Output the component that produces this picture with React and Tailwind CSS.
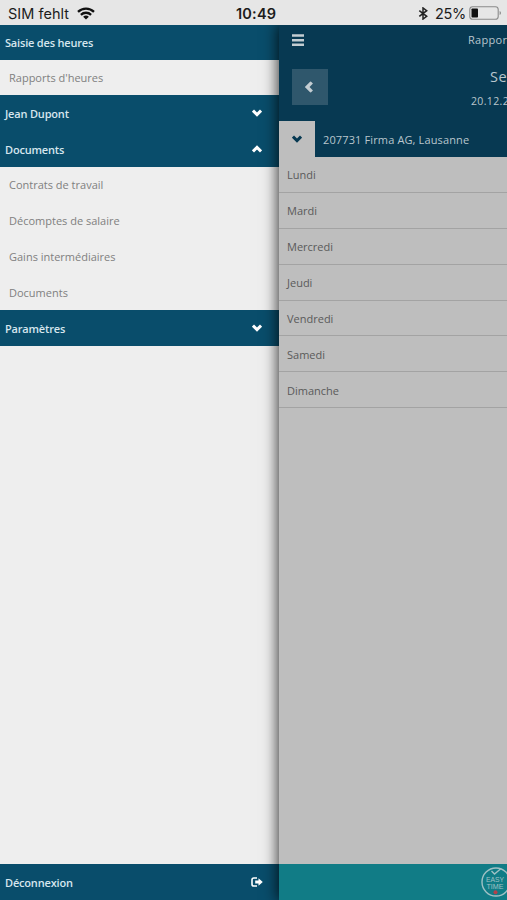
import clsx from "clsx";

const documents = ["Contrats de travail", "Décomptes de salaire", "Gains intermédiaires", "Documents"];

const days = ["Lundi", "Mardi", "Mercredi", "Jeudi", "Vendredi", "Samedi", "Dimanche"];

function Chevron({ className }) {
  return (
    <svg viewBox="0 0 10 8" className={clsx("h-2 w-2.5", className)} fill="none" stroke="currentColor" strokeWidth="2.9">
      <path d="M1 1.6 5 5.6 9 1.6" />
    </svg>
  );
}

function StatusBar() {
  return (
    <header className="flex h-[25px] shrink-0 items-center bg-[#e6e6e6] pt-[3px] pl-2 font-[Inter,sans-serif] text-[14.5px] leading-none text-[#1c1c1c]">
      <span className="w-[69px] whitespace-nowrap tracking-[0.02px]">SIM fehlt</span>
      <svg viewBox="0 0 18 13" className="h-[13px] w-[18px] -translate-y-px" fill="none" stroke="#111" strokeWidth="2.3">
        <path d="M1 4.8a11.5 11.5 0 0 1 16 0" />
        <path d="M3.9 7.8a7.4 7.4 0 0 1 10.2 0" />
        <path d="M6.1 9.8a4.2 4.2 0 0 1 5.8 0L9 12.6Z" fill="#111" stroke="none" />
      </svg>
      <span className="ml-[141px] w-[42px] whitespace-nowrap font-semibold tracking-[0.2px]">10:49</span>
      <svg viewBox="0 0 10 14" className="ml-[140px] h-[13px] w-[10px] -translate-y-px" fill="none" stroke="#222" strokeWidth="1.6">
        <path d="M1 4 9 10 5 13V1L9 4 1 10" />
      </svg>
      <span className="ml-[7px] w-[31px] whitespace-nowrap tracking-[-0.3px]">25%</span>
      <svg viewBox="0 0 33 14" className="ml-[3px] h-[14px] w-[33px] -translate-y-px">
        <rect x="0.8" y="0.8" width="28.4" height="12.4" rx="2.8" fill="none" stroke="#8b8b8b" strokeWidth="1.1" />
        <rect x="2.5" y="2.5" width="6.5" height="9" rx="0.8" fill="#111" />
        <path d="M30.6 5v4q1.4-.6 1.4-2t-1.4-2" fill="#8b8b8b" />
      </svg>
    </header>
  );
}

function MenuHeading({ label, className, children }) {
  return (
    <div className={clsx("flex shrink-0 items-center justify-between bg-[#094d6b] pr-[17px] pl-[5px] font-semibold tracking-[-0.18px] text-[#d6e6ee]", className)}>
      <span className="-translate-y-[0.5px]">{label}</span>
      {children}
    </div>
  );
}

function MenuItem({ label }) {
  return <div className="flex h-[35.8px] items-center pl-[9px] text-[#808080]">{label}</div>;
}

function Drawer() {
  return (
    <nav className="flex w-[279px] shrink-0 flex-col bg-[#eeeeee]">
      <MenuHeading label="Saisie des heures" className="h-[34.5px]" />
      <MenuItem label="Rapports d'heures" />
      <MenuHeading label="Jean Dupont" className="h-[35.8px]">
        <Chevron className="text-white" />
      </MenuHeading>
      <MenuHeading label="Documents" className="h-[35.9px]">
        <Chevron className="rotate-180 text-white" />
      </MenuHeading>
      {documents.map((item) => (
        <MenuItem key={item} label={item} />
      ))}
      <MenuHeading label="Paramètres" className="h-[36px]">
        <Chevron className="text-white" />
      </MenuHeading>
      <MenuHeading label="Déconnexion" className="mt-auto h-9">
        <svg viewBox="0 0 12 10" className="h-2.5 w-3 translate-x-px">
          <path d="M6 1H2.8Q1 1 1 2.8v4.4Q1 9 2.8 9H6" fill="none" stroke="white" strokeWidth="1.6" />
          <path d="M4.2 3.6H7.5V1.3L11.8 5 7.5 8.7V6.4H4.2Z" fill="white" />
        </svg>
      </MenuHeading>
    </nav>
  );
}

function EasyTimeLogo() {
  return (
    <svg viewBox="0 0 32 32" className="h-8 w-8 shrink-0" fill="none" stroke="#a0c1c5">
      <circle cx="16" cy="16" r="14" strokeWidth="1.4" />
      <path d="m11.5 5 3 3 6-5" strokeWidth="1.4" />
      <g fill="#a0c1c5" stroke="none" textAnchor="middle" fontSize="8" fontFamily="Liberation Sans, sans-serif">
        <text x="15" y="16" textLength="18" lengthAdjust="spacingAndGlyphs">EASY</text>
        <text x="15" y="23" textLength="17" lengthAdjust="spacingAndGlyphs">TIME</text>
      </g>
      <circle cx="15.5" cy="26.2" r="2" fill="#b5404a" stroke="none" />
    </svg>
  );
}

function Report() {
  return (
    <main className="relative flex min-w-0 flex-1 flex-col bg-[#bebebe] shadow-[0_0_14px_1px_rgba(0,0,0,0.8)]">
      <div className="h-[132px] shrink-0 bg-[#073952] text-[#b9c6cd]">
        <div className="flex h-[30px] items-center pl-[13px]">
          <svg viewBox="0 0 12 12" className="size-3 shrink-0" fill="#c3cdd2">
            <path d="M0 .3h12v2.5H0zM0 4.9h12v2.5H0zM0 9.5h12V12H0z" />
          </svg>
          <span className="ml-[164px] -translate-y-px whitespace-nowrap tracking-[0.3px]">Rapports d'heures</span>
        </div>
        <div className="flex h-[66px] items-start pt-[14px] pl-[13px]">
          <button className="flex size-9 shrink-0 items-center justify-center bg-[#2f576c]">
            <Chevron className="-translate-x-px scale-115 rotate-90 text-[#c4cdd2]" />
          </button>
          <div className="ml-[143px] whitespace-nowrap">
            <p className="ml-[19px] text-[14.5px] leading-[16px] tracking-[0.5px]">Semaine 51</p>
            <p className="mt-[8px] text-[10.5px] leading-[16px] tracking-[0.35px]">20.12.2017</p>
          </div>
        </div>
        <div className="flex h-9 items-center">
          <div className="flex size-9 shrink-0 items-center justify-center bg-[#bebebe]">
            <Chevron className="text-[#073952]" />
          </div>
          <span className="ml-2 whitespace-nowrap tracking-[0.13px]">207731 Firma AG, Lausanne</span>
        </div>
      </div>
      {days.map((day) => (
        <div key={day} className="flex h-[35.9px] shrink-0 items-center border-b border-[#a3a3a3] pt-px pl-2 text-[#5a5a5a]">
          {day}
        </div>
      ))}
      <footer className="mt-auto flex h-9 shrink-0 items-center bg-[#117c86] pl-[201px]">
        <EasyTimeLogo />
      </footer>
    </main>
  );
}

export default function App() {
  return (
    <div className="flex h-[900px] w-[507px] flex-col overflow-hidden font-['Open_Sans','Noto_Sans',sans-serif] text-[11px] leading-none">
      <StatusBar />
      <div className="flex min-h-0 flex-1 overflow-hidden">
        <Drawer />
        <Report />
      </div>
    </div>
  );
}
